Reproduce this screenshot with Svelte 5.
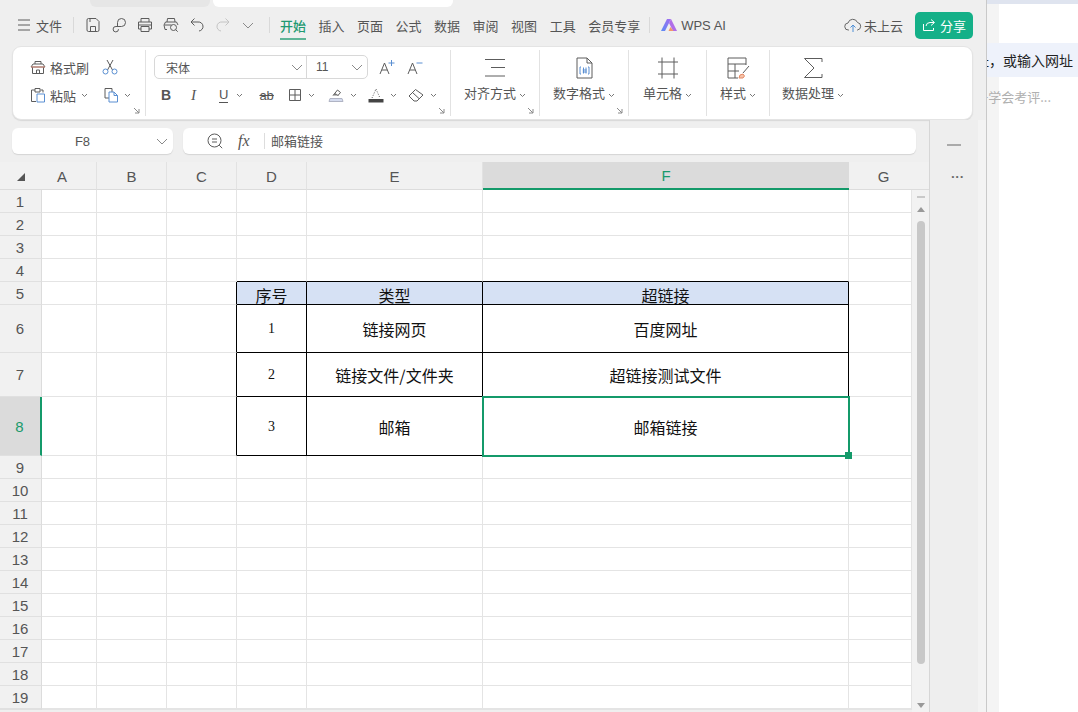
<script lang="ts">
  // WPS spreadsheet window, with a sliver of a browser behind it
  const tabs = ['插入', '页面', '公式', '数据', '审阅', '视图', '工具', '会员专享'];
  const cols = ['A', 'B', 'C', 'D', 'E', 'F', 'G'];
  const rowNums = Array.from({ length: 20 }, (_, i) => i + 1);

  const cells: Record<string, string> = {
    D5: '序号', E5: '类型', F5: '超链接',
    D6: '1', E6: '链接网页', F6: '百度网址',
    D7: '2', E7: '链接文件/文件夹', F7: '超链接测试文件',
    D8: '3', E8: '邮箱', F8: '邮箱链接',
  };

  function cellClass(col: string, row: number) {
    const inTableCol = col === 'D' || col === 'E' || col === 'F';
    const inTableRow = row >= 5 && row <= 8;
    let cls = 'cell';
    if ((inTableCol || col === 'C') && inTableRow) cls += ' edge-r';
    if (inTableCol && row >= 4 && row <= 8) cls += ' edge-b';
    if (inTableCol && row === 5) cls += ' head';
    if (inTableCol && /^\d$/.test(cells[col + row] ?? '')) cls += ' num';
    if (row === 8) cls += ' low';
    return cls;
  }
</script>

{#snippet chev()}
  <svg class="chev" viewBox="0 0 7 5" width="7" height="5"><path d="M1 1l2.5 2.5L6 1" /></svg>
{/snippet}

{#snippet launcher()}
  <svg class="launcher" viewBox="0 0 7 7" width="7" height="7"><path d="M1 1l5 5M6 2v4H2" /></svg>
{/snippet}

<div class="screen">
  <div class="win">
    <div class="tabstrip">
      <span class="tab-dim"></span>
      <span class="tab-white"></span>
    </div>

    <div class="titlebar">
      <svg class="ico menu" viewBox="0 0 12 12" width="12" height="12"><path d="M0 1h12M0 6h12M0 11h12" /></svg>
      <span class="file">文件</span>
      <i class="vsep first"></i>
      <div class="quick">
        <svg class="ico" viewBox="0 0 16 16" width="16" height="16"><path d="M2 3q0-1.500 1.500-1.500H11l3 3V13q0 1.500-1.500 1.500h-9Q2 14.500 2 13zM5.500 14.500V9.500h5v5M5 1.500V5" /></svg>
        <svg class="ico" viewBox="0 0 16 16" width="16" height="16"><path d="M6.500 9.500V5.500a4 4 0 1 1 4 4H5a2.700 2.700 0 1 0 2.500 2.700" /></svg>
        <svg class="ico" viewBox="0 0 16 16" width="16" height="16"><path d="M4 5V1.500h8V5M4 12H1.500V5h13v7H12M4 9.500h8v5H4zM1.500 8h13" /></svg>
        <svg class="ico" viewBox="0 0 16 16" width="16" height="16"><path d="M4 5l.500-3.500h7L12 5M4 12.500H2L1 8l1.500-3h11L15 8M1.500 8h7" /><circle cx="10.500" cy="10.500" r="3" /><path d="M12.700 12.700l2 2" /></svg>
        <svg class="ico" viewBox="0 0 16 16" width="16" height="16"><path d="M5.500 1.500L2 5l3.500 3.500M2 5h7a4.500 4.500 0 0 1 1 9" /></svg>
        <svg class="ico dim" viewBox="0 0 16 16" width="16" height="16"><path d="M10.500 1.500L14 5l-3.500 3.500M14 5H7a4.500 4.500 0 0 0-1 9" /></svg>
        <svg class="ico small" viewBox="0 0 12 7" width="12" height="7"><path d="M1 1l5 5 5-5" /></svg>
      </div>
      <i class="vsep second"></i>
      <nav class="tabs">
        <span class="tab active">开始</span>
        {#each tabs as tab}
          <span class="tab">{tab}</span>
        {/each}
      </nav>
      <i class="vsep third"></i>
      <svg class="wps-logo" viewBox="0 0 16 14" width="16" height="14">
        <defs>
          <linearGradient id="wpsA" x1="0" y1="1" x2="1" y2="0">
            <stop offset="0" stop-color="#5b8cf5" />
            <stop offset="1" stop-color="#a46cf0" />
          </linearGradient>
        </defs>
        <path d="M0 13L6 1h4L4 13z" fill="url(#wpsA)" />
        <path d="M8 5l2-4 6 12h-4z" fill="#b06ee8" />
        <path d="M7.500 13l2-4 3 4z" fill="#f2966b" />
      </svg>
      <span class="wps-ai">WPS AI</span>
      <svg class="cloud" viewBox="0 0 18 16" width="18" height="16">
        <path class="c1" d="M5 13H4.500a3.500 3.500 0 0 1-.500-7 5 5 0 0 1 9.500-.500 3.800 3.800 0 0 1 0 7.500H13" />
        <path class="c2" d="M9 15V8M6.500 10.500L9 8l2.500 2.500" />
      </svg>
      <span class="cloud-text">未上云</span>
      <button class="share">
        <svg viewBox="0 0 14 14" width="14" height="14"><path d="M9 1.500l3.500 3L9 7.500M12 4.500H8A4 4 0 0 0 4 8M1.500 6v6.500h10V10" /></svg>
        分享
      </button>
    </div>

    <div class="ribbon">
      <div class="group g1">
        <div class="row">
          <svg class="ico" viewBox="0 0 16 16" width="16" height="16"><path d="M5 5V2.500h6V5M1 8l2-3h10l2 3zM2.500 8v6.500h11V8M6.500 14.500V11h3v3.500" /><path class="red" d="M1 8h14" /></svg>
          <span class="lbl">格式刷</span>
          <svg class="ico cut" viewBox="0 0 16 16" width="16" height="16"><path d="M5 1l5.500 10M11 1L5.500 11" /><circle class="blue" cx="3.500" cy="12.500" r="2.500" /><circle class="blue" cx="12.500" cy="12.500" r="2.500" /></svg>
        </div>
        <div class="row">
          <svg class="ico" viewBox="0 0 16 16" width="16" height="16"><path d="M5 3H1.500v11.500H6M5 1.500h5V5H5zM10.500 3H13v2.500" /><path class="blue" d="M7 7h7.500v8H7z" /></svg>
          <span class="lbl">粘贴</span>
          {@render chev()}
          <svg class="ico copy" viewBox="0 0 16 16" width="16" height="16"><path d="M6 11H2V1.500h7V5" /><path class="blue" d="M6 5h5l3.500 3.500v6.500H6zM11 5v3.500h3.500" /></svg>
          {@render chev()}
        </div>
        {@render launcher()}
      </div>

      <div class="group g2">
        <div class="row font-row">
          <div class="combo">
            <span class="face">宋体</span>
            <svg class="ico small" viewBox="0 0 12 7" width="12" height="7"><path d="M1 1l5 5 5-5" /></svg>
            <i class="combo-sep"></i>
            <span class="size">11</span>
            <svg class="ico small" viewBox="0 0 12 7" width="12" height="7"><path d="M1 1l5 5 5-5" /></svg>
          </div>
          <svg class="ico big-a" viewBox="0 0 16 16" width="16" height="16"><path d="M1 15L5.500 4 10 15M2.800 11h5.400" /><path class="blue" d="M12.500 1v6M9.500 4h6" /></svg>
          <svg class="ico big-a" viewBox="0 0 16 16" width="16" height="16"><path d="M1 15L5.500 4 10 15M2.800 11h5.400" /><path class="blue" d="M9.500 4h6" /></svg>
        </div>
        <div class="row fmt-row">
          <span class="b">B</span>
          <span class="it">I</span>
          <span class="u">U</span>
          {@render chev()}
          <span class="ab">ab</span>
          <svg class="ico grid-ico" viewBox="0 0 14 14" width="14" height="14"><path d="M1.500 1.500h11v11h-11zM7 1.500v11M1.500 7h11" /></svg>
          {@render chev()}
          <svg class="ico fill-ico" viewBox="0 0 16 16" width="16" height="16"><path d="M5 8.500L9.500 3l3 2.500-3 3.500" /><path class="filled" d="M5 8.500L7 6l4 2.500z" /><path class="bar-blue" d="M2 11.500h12l1 3H1z" /></svg>
          {@render chev()}
          <svg class="ico color-ico" viewBox="0 0 16 16" width="16" height="16"><path class="dots" d="M4 11L8 2l4 9" /><path class="bar-dark" d="M0.500 12h15v3.500H0.500z" /></svg>
          {@render chev()}
          <svg class="ico erase-ico" viewBox="0 0 16 16" width="16" height="16"><path d="M1 9l6.500-6.500L15 8l-6 6H6zM4.500 5.500L11 11.500" /></svg>
          {@render chev()}
        </div>
        {@render launcher()}
      </div>

      <div class="group big g3">
        <svg class="ico" viewBox="0 0 24 22" width="24" height="22"><path d="M2 2.500h20M8 10.500h14M2 19h20" /></svg>
        <span class="big-lbl">对齐方式 {@render chev()}</span>
        {@render launcher()}
      </div>

      <div class="group big g4">
        <svg class="ico" viewBox="0 0 24 22" width="24" height="22"><path d="M5 1h10l5 5v15H5zM15 1v5h5" /><path class="blue" d="M9 10H8v7h1M16 10h1v7h-1M10.700 13h4M10.700 15h4M11.500 10.500v6M14 10.500v6" /></svg>
        <span class="big-lbl">数字格式 {@render chev()}</span>
        {@render launcher()}
      </div>

      <div class="group big g5">
        <svg class="ico" viewBox="0 0 24 22" width="24" height="22"><path d="M2 5h20M2 17h20M6 0.500v21M18 0.500v21" /></svg>
        <span class="big-lbl">单元格 {@render chev()}</span>
      </div>

      <div class="group big g6">
        <svg class="ico" viewBox="0 0 24 22" width="24" height="22"><path d="M20 8V1H2v20h10M2 7h18M2 14h11M9 7v14" /><path class="orange" d="M13 21l1-3 3-1 1.500 2-1.500 2z" /><path d="M17 16l6-7" /></svg>
        <span class="big-lbl">样式 {@render chev()}</span>
      </div>

      <div class="group big g7">
        <svg class="ico" viewBox="0 0 24 22" width="24" height="22"><path d="M21 5V1.500H3.500L13 11 3.500 20.500H21V17" /></svg>
        <span class="big-lbl">数据处理 {@render chev()}</span>
      </div>
    </div>

    <div class="body">
      <div class="main">
        <div class="formula">
          <div class="namebox">
            <span>F8</span>
            <svg class="ico small" viewBox="0 0 12 7" width="12" height="7"><path d="M1 1l5 5 5-5" /></svg>
          </div>
          <div class="fbar">
            <svg class="ico zoom-ico" viewBox="0 0 16 16" width="16" height="16"><circle cx="7.500" cy="7.500" r="6.500" /><path d="M12.200 12.200l3 3M5 6h5M5 9h5" /></svg>
            <span class="fx">fx</span>
            <i class="fsep"></i>
            <span class="fvalue">邮箱链接</span>
          </div>
        </div>

        <div class="sheet">
          <div class="corner"><i></i></div>
          {#each cols as col}
            <div class="colhead col-{col}" class:on={col === 'F'}>{col}</div>
          {/each}
          <div class="colfill"></div>

          <div class="scroll">
            <i class="s-dash"></i>
            <i class="s-up"></i>
            <i class="s-thumb"></i>
            <i class="s-down"></i>
          </div>

          {#each rowNums as row}
            <div class="rowhead" class:on={row === 8}>{row < 20 ? row : ''}</div>
            {#each cols as col}
              <div class={cellClass(col, row)}>{cells[col + row] ?? ''}</div>
            {/each}
          {/each}

          <div class="sel"><i class="handle"></i></div>
        </div>
      </div>

      <aside class="side">
        <i class="dash"></i>
        <span class="dots3">•••</span>
      </aside>
    </div>
  </div>

  <div class="behind">
    <div class="b-top"></div>
    <div class="b-input">址，或输入网址</div>
    <div class="b-hint">子学会考评...</div>
  </div>
</div>

<style>
  :global(body) {
    margin: 0;
    background: #fff;
  }

  .screen {
    display: flex;
    width: 1078px;
    height: 712px;
    overflow: hidden;
    font-family: "Noto Sans CJK SC", "Liberation Sans", sans-serif;
    color: #555;
  }

  .win {
    width: 986px;
    flex: none;
    display: flex;
    flex-direction: column;
    background: #efefef;
    border-right: 1px solid #c9c9c9;
    box-sizing: content-box;
  }

  /* window tabs, cut off by the top of the picture */
  .tabstrip {
    height: 7px;
    display: flex;
    padding-left: 90px;
    gap: 3px;
    flex: none;
  }
  .tab-dim {
    width: 120px;
    background: #e6e6e6;
    border-radius: 0 0 6px 6px;
  }
  .tab-white {
    width: 240px;
    background: #fff;
    border-radius: 0 0 6px 6px;
  }

  .titlebar {
    height: 36px;
    margin-bottom: 3px;
    display: flex;
    align-items: center;
    padding-left: 18px;
    font-size: 13px;
    flex: none;
  }

  .ico {
    fill: none;
    stroke: #5c5c5c;
    stroke-width: 1;
    flex: none;
    display: block;
  }
  .ico.dim { stroke: #c4c4c4; }
  .ico.small { stroke: #8a8a8a; }
  .ico .blue { stroke: #5a8fd2; }
  .ico .red { stroke: #d98a78; }
  .ico .orange { stroke: #e58a64; fill: #f5c4ac; }
  .ico .filled { fill: #777; stroke: none; }
  .ico .bar-blue { fill: #d5dcef; stroke: #b0b4c4; }
  .ico .bar-dark { fill: #444; stroke: none; }
  .ico .dots { stroke-dasharray: 1 1.500; }

  .file {
    margin-left: 6px;
    line-height: 1;
  }
  .vsep {
    width: 1px;
    height: 16px;
    background: #d9d9d9;
    flex: none;
  }
  .vsep.first { margin-left: 11px; }
  .vsep.second { margin-left: 15px; }
  .vsep.third { margin-left: 9px; }

  .quick {
    display: flex;
    align-items: center;
    gap: 10px;
    margin-left: 11px;
  }
  .quick .small { margin-left: 1px; }

  .tabs {
    display: flex;
    gap: 12.500px;
    margin-left: 10px;
    align-self: stretch;
    align-items: center;
  }
  .tab {
    position: relative;
    line-height: 1;
    white-space: nowrap;
  }
  .tab.active {
    color: #1f9a72;
    font-weight: 500;
  }
  .tab.active::after {
    content: '';
    position: absolute;
    left: 0;
    right: 0;
    bottom: -8px;
    height: 2px;
    background: #5fb597;
  }

  .wps-logo {
    margin-left: 11px;
    flex: none;
  }
  .wps-ai {
    margin-left: 4px;
    font-family: "Liberation Sans", sans-serif;
    font-size: 13px;
  }
  .cloud {
    margin-left: 118px;
    fill: none;
    flex: none;
  }
  .cloud .c1 { stroke: #666; }
  .cloud .c2 { stroke: #4f8fd6; }
  .cloud-text {
    margin-left: 2px;
    line-height: 1;
  }
  .share {
    margin-left: 12px;
    width: 58px;
    height: 27px;
    border: none;
    border-radius: 5px;
    background: #14b088;
    color: #fff;
    font: inherit;
    font-size: 13px;
    display: flex;
    align-items: center;
    justify-content: center;
    gap: 4px;
    padding: 0;
  }
  .share svg {
    fill: none;
    stroke: #fff;
    stroke-width: 1;
  }

  .ribbon {
    height: 74px;
    margin: 0 13px 0 12px;
    box-sizing: border-box;
    background: #fff;
    border: 1px solid #e4e4e4;
    border-radius: 9px;
    box-shadow: 0 1px 1px #d8d8d8;
    display: flex;
    padding: 3px 0;
    flex: none;
  }
  .group {
    position: relative;
    box-sizing: border-box;
    border-right: 1px solid #e2e2e2;
    flex: none;
  }
  .g1 { width: 133px; padding: 5px 0 0 17px; }
  .g2 { width: 305px; padding: 5px 0 0 8px; }
  .g3 { width: 89px; }
  .g4 { width: 89px; }
  .g5 { width: 78px; }
  .g6 { width: 63px; }
  .g7 { width: 86px; border-right: none; }

  .row {
    display: flex;
    align-items: center;
    height: 24px;
  }
  .row + .row { margin-top: 4px; }

  .lbl {
    font-size: 13px;
    margin-left: 4px;
    line-height: 1;
    white-space: nowrap;
  }
  .cut { margin-left: 13px; }
  .copy { margin-left: 15px; }
  .chev {
    fill: none;
    stroke: #777;
    stroke-width: 1;
    margin-left: 5px;
    flex: none;
  }
  .launcher {
    position: absolute;
    right: 5px;
    bottom: 2px;
    fill: none;
    stroke: #8a8a8a;
    stroke-width: 1;
  }

  .combo {
    width: 214px;
    height: 24px;
    box-sizing: border-box;
    border: 1px solid #d8d8d8;
    border-radius: 5px;
    display: flex;
    align-items: center;
    font-size: 12px;
    flex: none;
  }
  .face {
    margin-left: 11px;
    width: 125px;
  }
  .combo-sep {
    width: 1px;
    height: 22px;
    background: #d8d8d8;
    margin-left: 3px;
  }
  .size {
    font-family: "Liberation Sans", sans-serif;
    font-size: 12px;
    margin-left: 9px;
    width: 35px;
  }
  .big-a { margin-left: 11px; }
  .big-a + .big-a { margin-left: 12px; }

  .fmt-row {
    font-family: "Liberation Sans", sans-serif;
    color: #555;
  }
  .fmt-row .chev { margin-left: 6px; }
  .b {
    font-weight: 700;
    font-size: 14px;
    margin-left: 7px;
    width: 10px;
  }
  .it {
    font-family: "Liberation Serif", serif;
    font-style: italic;
    font-size: 15px;
    margin-left: 20px;
    width: 6px;
  }
  .u {
    font-size: 13px;
    margin-left: 22px;
    margin-right: 2px;
    line-height: 14px;
    border-bottom: 1px solid #555;
  }
  .ab {
    font-size: 13px;
    margin-left: 16px;
    text-decoration: line-through;
    line-height: 1;
  }
  .grid-ico { margin-left: 14px; }
  .fill-ico { margin-left: 13px; }
  .color-ico { margin-left: 11px; }
  .erase-ico { margin-left: 11px; }

  .big {
    display: flex;
    flex-direction: column;
    align-items: center;
    padding-top: 7px;
  }
  .big-lbl {
    margin-top: 6px;
    font-size: 13px;
    line-height: 16px;
    white-space: nowrap;
  }
  .big-lbl .chev { margin-left: 0; }

  .body {
    flex: 1;
    display: flex;
    min-height: 0;
  }
  .main {
    width: 929px;
    flex: none;
    display: flex;
    flex-direction: column;
    min-height: 0;
  }
  .formula {
    display: flex;
    gap: 10px;
    padding: 8px 13px 8px 12px;
    height: 26px;
    flex: none;
  }
  .namebox, .fbar {
    background: #fff;
    border-radius: 6px;
    box-shadow: 0 1px 1px #d4d4d4;
    display: flex;
    align-items: center;
    font-size: 13px;
  }
  .namebox {
    width: 161px;
    flex: none;
    box-sizing: border-box;
    padding-right: 20px;
    position: relative;
    justify-content: center;
    font-family: "Liberation Sans", sans-serif;
  }
  .namebox .ico {
    position: absolute;
    right: 5px;
    top: 10px;
  }
  .fbar { flex: 1; }
  .zoom-ico { margin-left: 24px; }
  .fx {
    font-family: "Liberation Serif", serif;
    font-style: italic;
    font-size: 16px;
    margin-left: 15px;
    width: 26px;
  }
  .fsep {
    width: 1px;
    height: 16px;
    background: #ddd;
  }
  .fvalue {
    margin-left: 6px;
    line-height: 1;
    margin-top: -2px;
  }

  .sheet {
    position: relative;
    display: grid;
    grid-template-columns: 42px 55px 70px 70px 70px 176px 366px 63px 17px;
    grid-template-rows: 28px repeat(5, 23px) 48px 44px 59px repeat(11, 23px);
    font-family: "Liberation Sans", sans-serif;
    background: #fff;
    flex: none;
  }
  .corner, .colhead, .colfill {
    background: #f1f1f1;
    border-bottom: 1px solid #dcdcdc;
    box-sizing: border-box;
  }
  .corner {
    display: flex;
    align-items: center;
    padding-left: 17px;
  }
  .corner i {
    width: 0;
    height: 0;
    border-style: solid;
    border-width: 0 0 8px 8px;
    border-color: transparent transparent #555 transparent;
    margin-top: 2px;
  }
  .colhead {
    display: flex;
    align-items: center;
    justify-content: center;
    font-size: 15px;
    color: #555;
    padding-top: 1px;
    border-right: 1px solid #e2e2e2;
  }
  .col-A { padding-right: 14px; }
  .col-G {
    padding-left: 6px;
    border-right: none;
  }
  .colhead.on {
    background: #dbdbdb;
    color: #1a9a6c;
    font-weight: 400;
    border-bottom: 2px solid #149a6a;
    border-right: none;
  }
  .rowhead {
    background: #f1f1f1;
    border-bottom: 1px solid #e0e0e0;
    border-right: 1px solid #dcdcdc;
    box-sizing: border-box;
    display: flex;
    align-items: center;
    justify-content: center;
    font-size: 15px;
    color: #555;
    padding-right: 1px;
  }
  .rowhead.on {
    background: #dbdbdb;
    color: #1a9a6c;
    border-right: 2px solid #149a6a;
    padding-top: 1px;
  }
  .cell {
    box-sizing: border-box;
    border-right: 1px solid #e4e4e4;
    border-bottom: 1px solid #e4e4e4;
    display: flex;
    align-items: center;
    justify-content: center;
    font-family: "Noto Sans CJK SC", sans-serif;
    font-size: 16px;
    color: #111;
    overflow: hidden;
    white-space: nowrap;
    min-width: 0;
  }
  .cell.num {
    font-family: "Liberation Serif", serif;
    font-size: 14px;
    padding-top: 1px;
  }
  .cell.low { padding-top: 2px; }
  .edge-r { border-right-color: #000; }
  .edge-b { border-bottom-color: #000; }
  .head {
    background: #d6e1f4;
    padding-top: 3px;
    line-height: 1;
  }

  .scroll {
    grid-column: 9;
    grid-row: 2 / 21;
    height: 522px;
    background: #f2f2f2;
    display: flex;
    flex-direction: column;
    align-items: center;
  }
  .s-dash {
    width: 8px;
    height: 2px;
    background: #c9c9c9;
    margin-top: 6px;
  }
  .s-up {
    width: 0;
    height: 0;
    border-style: solid;
    border-width: 0 4px 5px;
    border-color: transparent transparent #999;
    margin-top: 9px;
  }
  .s-thumb {
    width: 8px;
    height: 443px;
    border-radius: 4px;
    background: #c8c8c8;
    margin-top: 9px;
  }
  .s-down {
    width: 0;
    height: 0;
    border-style: solid;
    border-width: 5px 4px 0;
    border-color: #999 transparent transparent;
    margin-top: 39px;
  }

  .sel {
    position: absolute;
    left: 482px;
    top: 234px;
    width: 368px;
    height: 61px;
    box-sizing: border-box;
    border: 2px solid #149a6a;
  }
  .handle {
    position: absolute;
    right: -4px;
    bottom: -4px;
    width: 7px;
    height: 7px;
    background: #149a6a;
  }

  .side {
    flex: 1;
    position: relative;
    box-sizing: border-box;
    border-left: 1px solid #d6d6d6;
    border-right: 8px solid #f3f3f3;
    background: #eee;
    display: flex;
    flex-direction: column;
    align-items: center;
  }
  .dash {
    width: 14px;
    height: 2px;
    background: #aaa;
    margin-top: 24px;
  }
  .dots3 {
    font-family: "Liberation Sans", sans-serif;
    font-size: 8px;
    letter-spacing: 1.500px;
    margin-top: 26px;
    margin-left: 8px;
    color: #666;
    line-height: 10px;
  }

  .behind {
    flex: 1;
    min-width: 0;
    background: linear-gradient(to right, #f4f4f4 12px, #fff 12px);
  }
  .b-top {
    height: 4px;
    background: #dfe4ef;
  }
  .b-input {
    margin-top: 39px;
    height: 34px;
    background: #eef2fb;
    display: flex;
    align-items: center;
    justify-content: flex-end;
    padding-right: 5px;
    font-size: 14px;
    color: #222;
    white-space: nowrap;
    overflow: hidden;
  }
  .b-hint {
    margin-top: 11px;
    display: flex;
    justify-content: flex-end;
    padding-right: 27px;
    font-size: 13px;
    color: #b0b0b0;
    white-space: nowrap;
    overflow: hidden;
    line-height: 18px;
  }
</style>
